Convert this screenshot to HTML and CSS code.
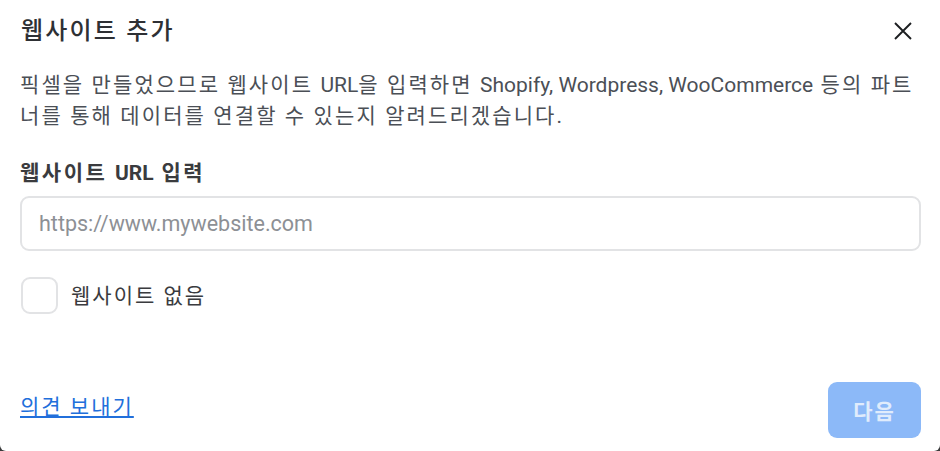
FILE: index.html
```
<!DOCTYPE html>
<html lang="ko">
<head>
<meta charset="utf-8">
<title>웹사이트 추가</title>
<link rel="stylesheet" href="styles.css">
</head>
<body>
<div class="dialog">
  <div class="header">
    <h1 class="title">웹사이트 추가</h1>
    <button class="close" aria-label="닫기">
      <svg width="20" height="20" viewBox="0 0 20 20"><path d="M2 2 L18 18 M18 2 L2 18" stroke="#1c1e21" stroke-width="1.9" fill="none"/></svg>
    </button>
  </div>
  <p class="desc">픽셀을 만들었으므로 웹사이트 <span class="en">URL</span>을 입력하면 <span class="en">Shopify, Wordpress, WooCommerce</span> 등의 파트너를 통해 데이터를 연결할 수 있는지 알려드리겠습니다.</p>
  <label class="label">웹사이트 <span class="en">URL</span> 입력</label>
  <div class="input">https://www.mywebsite.com</div>
  <div class="check-row">
    <span class="checkbox"></span>
    <span class="check-label">웹사이트 없음</span>
  </div>
  <div class="footer">
    <a class="link" href="#">의견 보내기</a>
    <button class="next">다음</button>
  </div>
</div>
</body>
</html>
```
FILE: styles.css
```
html, body {
  margin: 0;
  padding: 0;
  background: #3a3b3c;
}
.dialog {
  box-sizing: border-box;
  width: 940px;
  height: 451px;
  background: #fff;
  border-radius: 0 0 6px 6px;
  padding: 0 19px 13px 20px;
  display: flex;
  flex-direction: column;
  font-family: Roboto, "Noto Sans CJK KR", sans-serif;
  color: #1c1e21;
}
.en {
  letter-spacing: 0;
}
.header {
  height: 62px;
  display: flex;
  align-items: center;
  justify-content: space-between;
}
.title {
  margin: 0 0 0 1px;
  font-size: 24px;
  font-weight: 500;
  line-height: 30px;
  letter-spacing: 2.2px;
  color: #2e3034;
}
.close {
  border: 0;
  background: none;
  padding: 0;
  margin-right: 8px;
  width: 20px;
  height: 20px;
  display: flex;
}
.desc {
  margin: 8px -8px 0 0;
  font-size: 21px;
  line-height: 31px;
  letter-spacing: 2.1px;
  color: #4b4f56;
}
.label {
  display: block;
  margin-top: 29px;
  font-size: 21px;
  line-height: 24px;
  font-weight: 700;
  letter-spacing: 2.5px;
  color: #3a3b3e;
}
.input {
  box-sizing: border-box;
  margin-top: 11px;
  height: 55px;
  border: 2px solid #e2e3e5;
  border-radius: 9px;
  padding: 0 17px;
  display: flex;
  align-items: center;
  font-size: 21.5px;
  color: #8d9095;
}
.check-row {
  margin-top: 26px;
  display: flex;
  align-items: center;
  gap: 13px;
}
.checkbox {
  box-sizing: border-box;
  width: 37px;
  height: 37px;
  border: 2px solid #e2e3e5;
  border-radius: 9px;
  margin-left: 1px;
}
.check-label {
  font-size: 21px;
  line-height: 24px;
  letter-spacing: 2px;
  color: #3a3b3e;
}
.footer {
  margin-top: auto;
  display: flex;
  align-items: center;
  justify-content: space-between;
}
.link {
  font-size: 21px;
  line-height: 24px;
  letter-spacing: 2px;
  color: #216fdb;
  text-decoration: underline;
  margin-top: -6px;
}
.next {
  width: 93px;
  height: 56px;
  border: 0;
  border-radius: 9px;
  background: #8cb9f8;
  color: #e0ecfc;
  font-family: Roboto, "Noto Sans CJK KR", sans-serif;
  font-size: 21px;
  font-weight: 700;
  letter-spacing: 2px;
}
```
